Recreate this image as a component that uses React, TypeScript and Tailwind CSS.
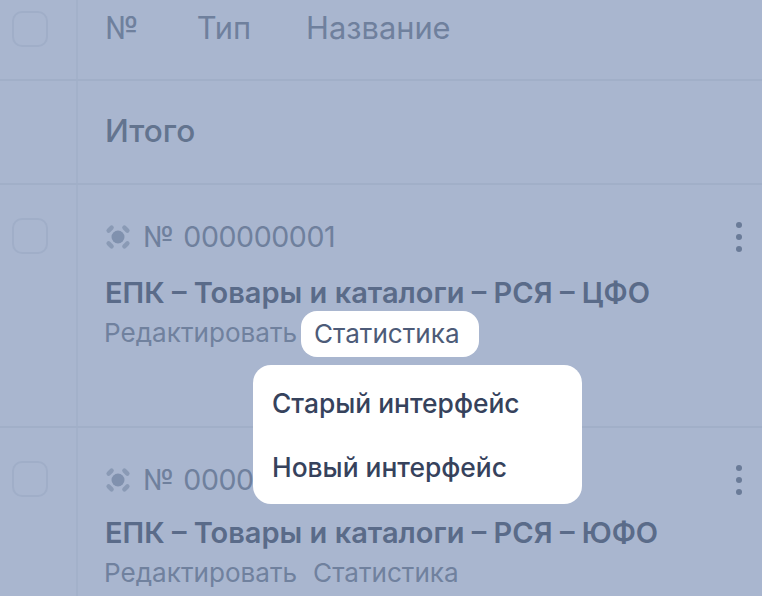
function Check() {
  return <div className="h-9 w-9 rounded-[10px] border-2 border-[#a0aec8]" />;
}

function TargetIcon() {
  return (
    <svg width="26" height="26" viewBox="0 0 26 26" className="shrink-0">
      <circle cx="13" cy="13" r="6.5" fill="#8091ae" />
      <g fill="none" stroke="#8a9ab5" strokeWidth="4.4" strokeLinecap="round">
        <path d="M3.6 6.6 L6.6 3.6" />
        <path d="M19.4 3.6 L22.4 6.6" />
        <path d="M3.6 19.4 L6.6 22.4" />
        <path d="M19.4 22.4 L22.4 19.4" />
      </g>
    </svg>
  );
}

function Dots() {
  return (
    <div className="flex flex-col gap-[6px]">
      <div className="h-[6px] w-[6px] rounded-full bg-[#6a7b98]" />
      <div className="h-[6px] w-[6px] rounded-full bg-[#6a7b98]" />
      <div className="h-[6px] w-[6px] rounded-full bg-[#6a7b98]" />
    </div>
  );
}

function Row({ id, title, height, titleGap, linkGap, hideLink, children }: { id: string; title: string; height: string; titleGap: string; linkGap: string; hideLink?: boolean; children?: React.ReactNode }) {
  return (
    <div className={`flex border-b-2 border-[#a1afc8] ${height}`}>
      <div className="w-[78px] shrink-0 border-r-2 border-[#a3b1ca] pl-[12px] pt-[33px]">
        <Check />
      </div>
      <div className="relative min-w-0 flex-1 pl-[27px] pt-[32px]">
        <div className="flex h-[40px] items-center gap-[12px] text-[28.5px] tracking-[-0.4px] [word-spacing:2px] text-[#6f809d]">
          <TargetIcon />
          <span>{id}</span>
        </div>
        <div className={`${titleGap} h-[36px] whitespace-nowrap text-[29px] leading-[36px] font-semibold text-[#5a6b89]`}>{title}</div>
        <div className={`${linkGap} -ml-px flex h-[34px] items-center whitespace-nowrap text-[26.1px] text-[#70819e]`}>
          <span>Редактировать</span>
          <span className={`ml-[16px] ${hideLink ? "invisible" : ""}`}>Статистика</span>
        </div>
        <div className="absolute right-[20px] top-[37px]">
          <Dots />
        </div>
        {children}
      </div>
    </div>
  );
}

export default function App() {
  return (
    <div className="relative h-[596px] w-[762px] overflow-hidden bg-[#a9b6cf] font-['Inter',sans-serif]">
      <div className="flex h-[81px] border-b-2 border-[#a1afc8]">
        <div className="w-[78px] shrink-0 border-r-2 border-[#a3b1ca] pl-[12px] pt-[11px]">
          <Check />
        </div>
        <div className="flex flex-1 items-start pl-[27px] pt-[8px] text-[30.8px] leading-[40px] text-[#6f809d]">
          <span>№</span>
          <span className="ml-[58px]">Тип</span>
          <span className="ml-[55px]">Название</span>
        </div>
      </div>
      <div className="flex h-[104px] border-b-2 border-[#a1afc8]">
        <div className="w-[78px] shrink-0 border-r-2 border-[#a3b1ca]" />
        <div className="flex-1 pl-[27px] pt-[30px] text-[31.5px] leading-[40px] font-medium text-[#63748f]">Итого</div>
      </div>
      <Row id="№ 000000001" title="ЕПК – Товары и каталоги – РСЯ – ЦФО" height="h-[243px]" titleGap="mt-[18px]" linkGap="mt-[5px]" hideLink>
        <div className="absolute left-[223px] top-[126px] flex h-[46px] w-[178px] items-center rounded-[16px] bg-white pl-[13px] text-[26.1px] whitespace-nowrap text-[#4d5b78]">
          Статистика
        </div>
        <div className="absolute left-[175px] top-[180px] z-10 flex h-[139px] w-[329px] flex-col justify-center gap-[24px] rounded-[18px] bg-white pl-[19px] text-[26.4px] leading-[40px] font-medium whitespace-nowrap text-[#36425c]">
          <div>Старый интерфейс</div>
          <div>Новый интерфейс</div>
        </div>
      </Row>
      <Row id="№ 000000002" title="ЕПК – Товары и каталоги – РСЯ – ЮФО" height="h-[170px]" titleGap="mt-[15px]" linkGap="mt-[5px]" />
    </div>
  );
}
